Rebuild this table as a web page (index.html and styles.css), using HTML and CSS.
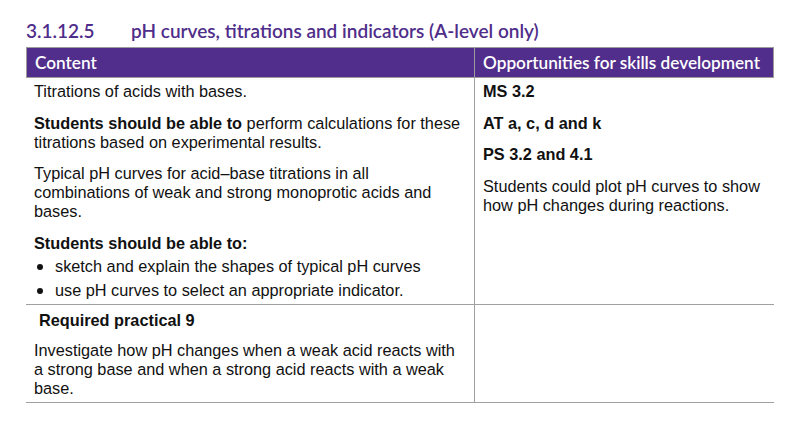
FILE: index.html
```html
<!DOCTYPE html>
<html>
<head>
<meta charset="utf-8">
<link rel="stylesheet" href="styles.css">
</head>
<body>
<div class="page">
  <h2 class="title"><span class="num">3.1.12.5</span><span class="name">pH curves, titrations and indicators (A-level only)</span></h2>
  <div class="table">
    <div class="head">Content</div>
    <div class="head right">Opportunities for skills development</div>

    <div class="cell">
      <p>Titrations of acids with bases.</p>
      <p><b>Students should be able to</b> perform calculations for these titrations based on experimental results.</p>
      <p>Typical pH curves for acid–base titrations in all combinations of weak and strong monoprotic acids and bases.</p>
      <p class="last-p"><b>Students should be able to:</b></p>
      <ul>
        <li>sketch and explain the shapes of typical pH curves</li>
        <li>use pH curves to select an appropriate indicator.</li>
      </ul>
    </div>
    <div class="cell right">
      <p><b>MS 3.2</b></p>
      <p><b>AT a, c, d and k</b></p>
      <p><b>PS 3.2 and 4.1</b></p>
      <p>Students could plot pH curves to show how pH changes during reactions.</p>
    </div>

    <div class="cell row2">
      <p class="req"><b>Required practical 9</b></p>
      <p>Investigate how pH changes when a weak acid reacts with a strong base and when a strong acid reacts with a weak base.</p>
    </div>
    <div class="cell right row2"></div>
  </div>
</div>
</body>
</html>
```

FILE: styles.css
```css
* { box-sizing: border-box; }
html, body { margin: 0; padding: 0; background: #fff; }
body { font-family: "Liberation Sans", Arial, sans-serif; color: #111; }
.page { padding: 19px 0 0 26px; width: 800px; }
.title {
  margin: 0 0 5px;
  font-family: Lato, "Noto Sans", sans-serif;
  font-weight: 600;
  font-size: 19px;
  line-height: 23px;
  color: #4f2d8a;
  display: flex;
}
.title .num { width: 105px; }
.table {
  display: grid;
  grid-template-columns: 448px 300px;
  width: 748px;
}
.head {
  background: #522e8c;
  color: #fff;
  font-family: Lato, "Noto Sans", sans-serif;
  font-weight: 600;
  font-size: 17.2px;
  height: 31px;
  line-height: 29px;
  padding-left: 8px;
  border-top: 1px solid #9c9c9c;
  border-bottom: 1px solid #9c9c9c;
  border-left: 1px solid #9c9c9c;
  white-space: nowrap;
}
.head.right { padding-left: 8px; border-right: 1px solid #9c9c9c; }
.cell {
  font-size: 16.3px;
  line-height: 19px;
  padding: 4px 12px 4px 8px;
  border-bottom: 1px solid #a0a0a0;
}
.cell.right { border-left: 1px solid #a0a0a0; padding-left: 8px; padding-right: 4px; }
.cell p { margin: 0 0 12.5px; }
.cell p:last-child { margin-bottom: 0; }
.cell p.last-p { margin-bottom: 0; }
.cell ul { margin: 0; padding: 0; list-style: none; }
.cell li { position: relative; padding-left: 21px; margin-top: 4.5px; }
.cell li::before {
  content: "";
  position: absolute;
  left: 3px; top: 7px;
  width: 6px; height: 6px;
  border-radius: 50%;
  background: #111;
}
.cell.row2 { padding-top: 6px; padding-bottom: 4px; }
.cell .req { margin-bottom: 11px; padding-left: 5px; }
.cell.right p:nth-child(3) { margin-bottom: 13px; }
```
